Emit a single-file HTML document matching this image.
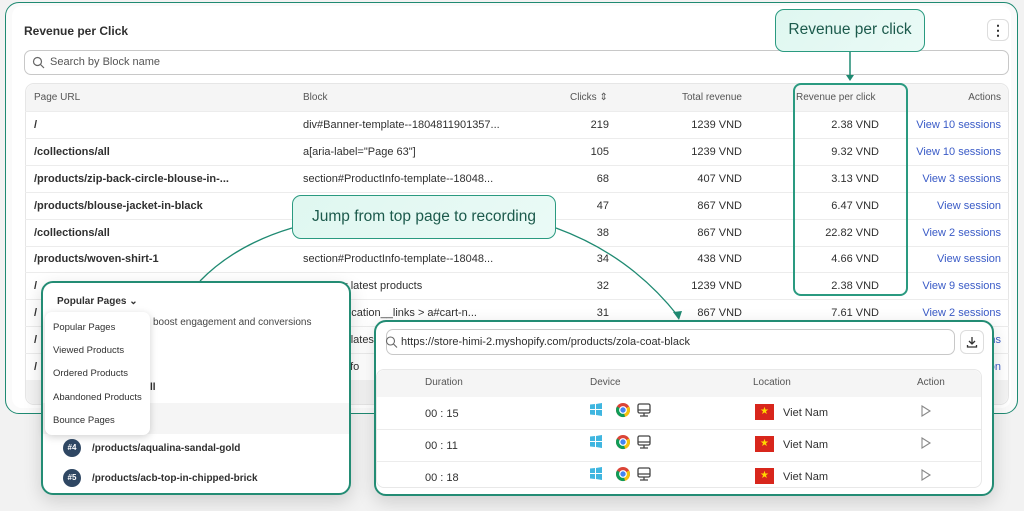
<!DOCTYPE html>
<html><head><meta charset="utf-8"><style>
*{box-sizing:border-box;margin:0;padding:0}
body{width:1024px;height:511px;overflow:hidden;background:#f2f2f2;font-family:"Liberation Sans",sans-serif;color:#303030;position:relative}
.abs{position:absolute}
.panel{left:5px;top:2px;width:1013px;height:412px;border:1.5px solid #1f8a72;border-radius:14px;background:#fafafa}
.inner{left:12px;top:6px;width:999px;height:402px;background:#fff;border-radius:10px}
.t{font-size:11px;white-space:nowrap}
.b{font-weight:bold}
.r{text-align:right}
.link{color:#3a5bc7}
.row{left:25px;width:984px;height:27px;border-top:1px solid #ececec}
.callout{background:linear-gradient(135deg,#dff7f0,#eafaf6);border:1.5px solid #2a9a80;border-radius:9px;color:#1c5a4c;font-size:15.5px;text-align:center}
.pop{background:#fff;border:2px solid #238c74;border-radius:12px;box-shadow:0 6px 18px rgba(0,0,0,.15)}
.badge{width:18px;height:18px;border-radius:50%;background:#2f4763;color:#fff;font-size:8px;font-weight:bold;text-align:center;line-height:18px}
.flag{width:19px;height:16px;background:#d8261c;color:#ffd800;font-size:10px;text-align:center;line-height:16px}
</style></head><body>
<div class="abs panel"></div>
<div class="abs inner"></div>
<div class="abs t b" style="left:24px;top:24px;font-size:12px">Revenue per Click</div>
<div class="abs" style="left:987px;top:19px;width:22px;height:22px;border:1px solid #ddd;border-radius:6px;background:#fff;text-align:center;font-size:14px;line-height:20px;font-weight:bold">⋮</div>
<div class="abs" style="left:24px;top:50px;width:985px;height:25px;border:1px solid #c8c8c8;border-radius:7px"></div>
<svg class="abs" style="left:32px;top:56px" width="13" height="13"><circle cx="5.5" cy="5.5" r="4" fill="none" stroke="#666" stroke-width="1.2"/><path d="M8.5 8.5L12 12" stroke="#666" stroke-width="1.2"/></svg>
<div class="abs t" style="left:50px;top:56px;color:#555">Search by Block name</div>
<div class="abs" style="left:25px;top:83px;width:984px;height:322px;border:1px solid #e6e6e6;border-radius:9px;background:#fff"></div>
<div class="abs" style="left:26px;top:84px;width:982px;height:27px;background:#f5f5f5;border-radius:9px 9px 0 0"></div>
<div class="abs" style="left:26px;top:380px;width:982px;height:24px;background:#f3f3f3;border-radius:0 0 9px 9px"></div>
<div class="abs t" style="left:34px;top:92px;font-size:10px;color:#555">Page URL</div>
<div class="abs t" style="left:303px;top:92px;font-size:10px;color:#555">Block</div>
<div class="abs t" style="left:570px;top:92px;font-size:10px;color:#555">Clicks ⇕</div>
<div class="abs t r" style="left:640px;width:102px;top:92px;font-size:10px;color:#555">Total revenue</div>
<div class="abs t" style="left:796px;top:92px;font-size:10px;color:#555">Revenue per click</div>
<div class="abs t r" style="left:900px;width:101px;top:92px;font-size:10px;color:#555">Actions</div>

<div class="abs row" style="top:111px"></div><div class="abs row" style="top:138px"></div><div class="abs row" style="top:165px"></div><div class="abs row" style="top:192px"></div><div class="abs row" style="top:219px"></div><div class="abs row" style="top:246px"></div><div class="abs row" style="top:272px"></div><div class="abs row" style="top:299px"></div><div class="abs row" style="top:326px"></div><div class="abs row" style="top:353px"></div>

<div class="abs t b" style="left:34px;top:119px">/</div><div class="abs t" style="left:303px;top:119px">div#Banner-template--1804811901357...</div><div class="abs t r" style="left:560px;width:49px;top:119px">219</div><div class="abs t r" style="left:640px;width:102px;top:119px">1239 VND</div><div class="abs t r" style="left:780px;width:99px;top:119px">2.38 VND</div><div class="abs t r link" style="left:880px;width:121px;top:119px">View 10 sessions</div>
<div class="abs t b" style="left:34px;top:146px">/collections/all</div><div class="abs t" style="left:303px;top:146px">a[aria-label="Page 63"]</div><div class="abs t r" style="left:560px;width:49px;top:146px">105</div><div class="abs t r" style="left:640px;width:102px;top:146px">1239 VND</div><div class="abs t r" style="left:780px;width:99px;top:146px">9.32 VND</div><div class="abs t r link" style="left:880px;width:121px;top:146px">View 10 sessions</div>
<div class="abs t b" style="left:34px;top:173px">/products/zip-back-circle-blouse-in-...</div><div class="abs t" style="left:303px;top:173px">section#ProductInfo-template--18048...</div><div class="abs t r" style="left:560px;width:49px;top:173px">68</div><div class="abs t r" style="left:640px;width:102px;top:173px">407 VND</div><div class="abs t r" style="left:780px;width:99px;top:173px">3.13 VND</div><div class="abs t r link" style="left:880px;width:121px;top:173px">View 3 sessions</div>
<div class="abs t b" style="left:34px;top:200px">/products/blouse-jacket-in-black</div><div class="abs t r" style="left:560px;width:49px;top:200px">47</div><div class="abs t r" style="left:640px;width:102px;top:200px">867 VND</div><div class="abs t r" style="left:780px;width:99px;top:200px">6.47 VND</div><div class="abs t r link" style="left:880px;width:121px;top:200px">View session</div>
<div class="abs t b" style="left:34px;top:227px">/collections/all</div><div class="abs t r" style="left:560px;width:49px;top:227px">38</div><div class="abs t r" style="left:640px;width:102px;top:227px">867 VND</div><div class="abs t r" style="left:780px;width:99px;top:227px">22.82 VND</div><div class="abs t r link" style="left:880px;width:121px;top:227px">View 2 sessions</div>
<div class="abs t b" style="left:34px;top:253px">/products/woven-shirt-1</div><div class="abs t" style="left:303px;top:253px">section#ProductInfo-template--18048...</div><div class="abs t r" style="left:560px;width:49px;top:253px">34</div><div class="abs t r" style="left:640px;width:102px;top:253px">438 VND</div><div class="abs t r" style="left:780px;width:99px;top:253px">4.66 VND</div><div class="abs t r link" style="left:880px;width:121px;top:253px">View session</div>
<div class="abs t b" style="left:34px;top:280px">/</div><div class="abs t" style="left:303px;top:280px">Shop our latest products</div><div class="abs t r" style="left:560px;width:49px;top:280px">32</div><div class="abs t r" style="left:640px;width:102px;top:280px">1239 VND</div><div class="abs t r" style="left:780px;width:99px;top:280px">2.38 VND</div><div class="abs t r link" style="left:880px;width:121px;top:280px">View 9 sessions</div>
<div class="abs t b" style="left:34px;top:307px">/</div><div class="abs t" style="left:303px;top:307px">.cart-notification__links &gt; a#cart-n...</div><div class="abs t r" style="left:560px;width:49px;top:307px">31</div><div class="abs t r" style="left:640px;width:102px;top:307px">867 VND</div><div class="abs t r" style="left:780px;width:99px;top:307px">7.61 VND</div><div class="abs t r link" style="left:880px;width:121px;top:307px">View 2 sessions</div>
<div class="abs t b" style="left:34px;top:334px">/</div><div class="abs t" style="left:303px;top:334px">Shop our latest</div><div class="abs t r link" style="left:880px;width:121px;top:334px">View 2 sessions</div>
<div class="abs t b" style="left:34px;top:361px">/</div><div class="abs t" style="left:303px;top:361px">ProductInfo</div><div class="abs t r link" style="left:880px;width:121px;top:361px">View session</div>

<div class="abs" style="left:793px;top:83px;width:115px;height:213px;border:2px solid #2a9a80;border-radius:8px"></div>
<div class="abs callout" style="left:775px;top:9px;width:150px;height:43px;line-height:40px">Revenue per click</div>
<svg class="abs" style="left:0;top:0" width="1024" height="511">
<path d="M850 52V77" stroke="#1f8a72" stroke-width="1.5"/><path d="M846 75L850 81L854 75Z" fill="#1f8a72"/>
<path d="M292 228Q235 245 200 281" fill="none" stroke="#1f8a72" stroke-width="1.3"/>
<path d="M556 228Q630 255 678 316" fill="none" stroke="#1f8a72" stroke-width="1.3"/><path d="M673 312L679 320L682 311Z" fill="#1f8a72"/>
</svg>
<div class="abs callout" style="left:292px;top:195px;width:264px;height:44px;line-height:42px">Jump from top page to recording</div>

<div class="abs pop" style="left:41px;top:281px;width:310px;height:214px"></div>
<div class="abs t b" style="left:57px;top:296px;font-size:10px">Popular Pages ⌄</div>
<div class="abs t" style="left:153px;top:317px;font-size:10px;color:#444">boost engagement and conversions</div>
<div class="abs t b" style="left:150px;top:382px;font-size:10px">ll</div>
<div class="abs" style="left:43px;top:403px;width:306px;height:31px;background:#f5f5f5"></div>
<div class="abs" style="left:45px;top:312px;width:105px;height:123px;background:#fff;border-radius:7px;box-shadow:0 2px 8px rgba(0,0,0,.18)"></div>
<div class="abs t" style="left:53px;top:322px;font-size:9.5px">Popular Pages</div>
<div class="abs t" style="left:53px;top:345px;font-size:9.5px">Viewed Products</div>
<div class="abs t" style="left:53px;top:368px;font-size:9.5px">Ordered Products</div>
<div class="abs t" style="left:53px;top:392px;font-size:9.5px">Abandoned Products</div>
<div class="abs t" style="left:53px;top:415px;font-size:9.5px">Bounce Pages</div>
<div class="abs badge" style="left:63px;top:439px">#4</div><div class="abs t b" style="left:92px;top:443px;font-size:10px">/products/aqualina-sandal-gold</div>
<div class="abs badge" style="left:63px;top:469px">#5</div><div class="abs t b" style="left:92px;top:473px;font-size:10px">/products/acb-top-in-chipped-brick</div>

<div class="abs pop" style="left:374px;top:320px;width:620px;height:176px"></div>
<div class="abs" style="left:386px;top:329px;width:569px;height:26px;border:1px solid #c8c8c8;border-radius:7px"></div>
<svg class="abs" style="left:384px;top:335px" width="14" height="14"><circle cx="6.5" cy="6" r="4" fill="none" stroke="#666" stroke-width="1.1"/><path d="M9.5 9L13 12.5" stroke="#666" stroke-width="1.1"/></svg>
<div class="abs t" style="left:401px;top:336px">https://store-himi-2.myshopify.com/products/zola-coat-black</div>
<div class="abs" style="left:960px;top:330px;width:24px;height:24px;border:1px solid #ddd;border-radius:6px;background:#fff"></div>
<svg class="abs" style="left:965px;top:335px" width="14" height="14"><path d="M7 2V9M4 6L7 9L10 6M2.5 10V12H11.5V10" fill="none" stroke="#333" stroke-width="1.3"/></svg>
<div class="abs" style="left:376px;top:369px;width:606px;height:119px;border:1px solid #e8e8e8;border-radius:8px"></div>
<div class="abs" style="left:377px;top:370px;width:604px;height:27px;background:#f5f5f5;border-radius:8px 8px 0 0"></div>
<div class="abs" style="left:377px;top:429px;width:604px;border-top:1px solid #ececec"></div>
<div class="abs" style="left:377px;top:461px;width:604px;border-top:1px solid #ececec"></div>
<div class="abs t" style="left:425px;top:377px;font-size:10px;color:#555">Duration</div>
<div class="abs t" style="left:590px;top:377px;font-size:10px;color:#555">Device</div>
<div class="abs t" style="left:753px;top:377px;font-size:10px;color:#555">Location</div>
<div class="abs t" style="left:917px;top:377px;font-size:10px;color:#555">Action</div>
<div class="abs t" style="left:425px;top:408px">00 : 15</div>
<div class="abs t" style="left:425px;top:440px">00 : 11</div>
<div class="abs t" style="left:425px;top:472px">00 : 18</div>
<svg class="abs" style="left:588px;top:402px" width="70" height="90">
<defs><g id="d"><path d="M2 2.5L7 2V7H2ZM8 2L14 1V7H8ZM2 8H7V13L2 12.5ZM8 8H14V14L8 13Z" fill="#3fb6e0"/><circle cx="35" cy="8" r="7" fill="#db4437"/><path d="M35 8L41 4.5A7 7 0 0 1 37 14.8Z" fill="#f4c20d"/><path d="M35 8L37 14.8A7 7 0 0 1 29 4.5Z" fill="#0f9d58"/><circle cx="35" cy="8" r="3.3" fill="#4285f4" stroke="#fff" stroke-width="1.2"/><rect x="50" y="2" width="12" height="9" rx="1.5" fill="none" stroke="#444" stroke-width="1.3"/><path d="M50 8H62M56 11V14M52 14H60" stroke="#444" stroke-width="1.3"/></g></defs>
<use href="#d"/><use href="#d" y="32"/><use href="#d" y="64"/></svg>
<div class="abs flag" style="left:755px;top:404px">★</div><div class="abs t" style="left:783px;top:407px">Viet Nam</div>
<div class="abs flag" style="left:755px;top:436px">★</div><div class="abs t" style="left:783px;top:439px">Viet Nam</div>
<div class="abs flag" style="left:755px;top:468px">★</div><div class="abs t" style="left:783px;top:471px">Viet Nam</div>
<svg class="abs" style="left:920px;top:404px" width="12" height="80"><g fill="none" stroke="#888" stroke-width="1.1"><path d="M2 2L10 7L2 12Z"/><path d="M2 34L10 39L2 44Z"/><path d="M2 66L10 71L2 76Z"/></g></svg>
</body></html>
